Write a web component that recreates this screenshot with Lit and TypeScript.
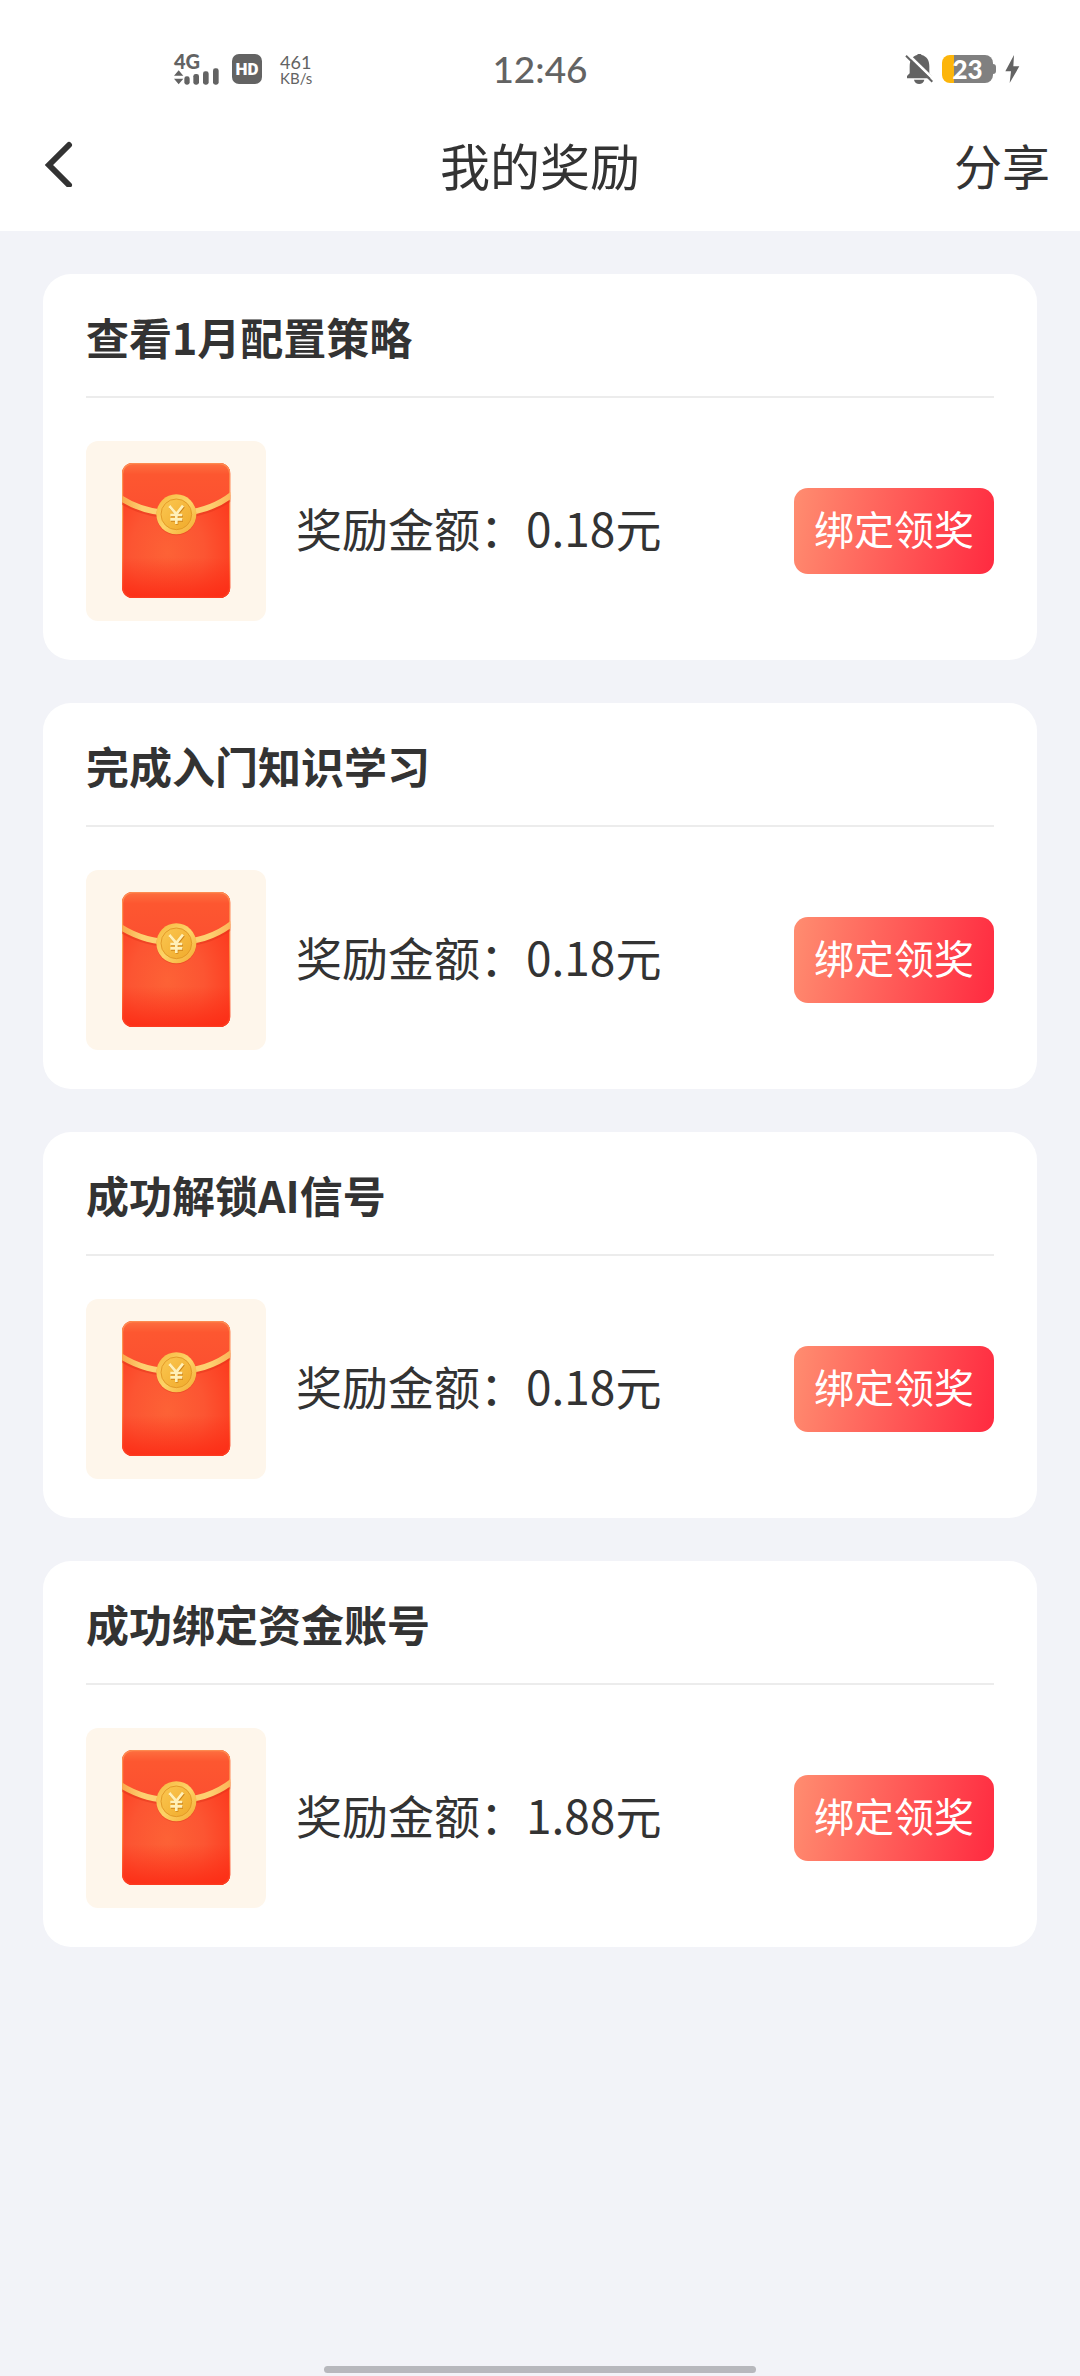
import { LitElement, html, css, svg } from "lit";
import { customElement, property } from "lit/decorators.js";

interface Reward {
  title: string;
  amount: string;
}

const REWARDS: Reward[] = [
  { title: "查看1月配置策略", amount: "0.18" },
  { title: "完成入门知识学习", amount: "0.18" },
  { title: "成功解锁AI信号", amount: "0.18" },
  { title: "成功绑定资金账号", amount: "1.88" },
];

@customElement("status-bar")
export class StatusBar extends LitElement {
  static styles = css`
    :host {
      display: grid;
      grid-template-columns: 1fr auto 1fr;
      align-items: center;
      height: 100px;
      padding: 38px 60px 0 174px;
      box-sizing: border-box;
      color: #636363;
      font-family: Lato, "Noto Sans", sans-serif;
    }
    .left,
    .right {
      display: flex;
      align-items: center;
    }
    .right {
      justify-content: flex-end;
      gap: 9px;
    }
    .signal {
      display: flex;
      flex-direction: column;
      width: 45px;
      margin-right: 13px;
    }
    .network {
      font: 900 20px/14px Lato, sans-serif;
    }
    .hd {
      width: 30px;
      height: 30px;
      margin-right: 18px;
      border-radius: 7px;
      background: #636363;
      color: #fff;
      font: 900 17px/30px Roboto, sans-serif;
      text-align: center;
    }
    .speed {
      display: flex;
      flex-direction: column;
      font-size: 15px;
      line-height: 15px;
    }
    .rate {
      font-size: 18px;
      line-height: 18px;
    }
    .clock {
      margin-right: 114px;
      font-size: 37px;
      line-height: 40px;
      font-weight: 500;
    }
    .battery {
      display: flex;
      align-items: center;
    }
    .cell {
      width: 51px;
      height: 28px;
      border-radius: 8px;
      background: linear-gradient(to right, #fcb50b 12px, #808080 12px);
      color: #fff;
      font: 900 26px/28px Lato, sans-serif;
      text-align: center;
    }
    .tip {
      width: 3px;
      height: 10px;
      border-radius: 0 3px 3px 0;
      background: #808080;
    }
    svg {
      display: block;
    }
  `;

  render() {
    return html`
      <div class="left">
        <div class="signal">
          <span class="network">4G</span>
          <svg width="45" height="17" viewBox="43 76 135 51" fill="#636363" aria-hidden="true">
            <path d="M43 99L57 83L71 99ZM43 108H71L57 125Z" />
            <rect x="74" y="101" width="16" height="25" rx="7" />
            <rect x="101" y="94" width="17" height="32" rx="7" />
            <rect x="130" y="86" width="17" height="40" rx="7" />
            <rect x="160" y="77" width="17" height="49" rx="7" />
          </svg>
        </div>
        <span class="hd">HD</span>
        <div class="speed"><span class="rate">461</span><span>KB/s</span></div>
      </div>
      <time class="clock">12:46</time>
      <div class="right">
        <svg width="28" height="30" viewBox="76 36 84 90" fill="#636363" aria-hidden="true">
          <path d="M82 109V102L90 94V73C90 52 100 42 112 39C114 34 124 34 126 39C141 43 149 54 149 73V94L156 102V109Z" />
          <path d="M103 113H134C132 130 105 130 103 113Z" />
          <path d="M84 36L164 114" stroke="#fff" stroke-width="8" />
          <path d="M79 41L158 119" stroke="#636363" stroke-width="6" />
        </svg>
        <div class="battery"><span class="cell">23</span><span class="tip"></span></div>
        <svg width="15" height="28" viewBox="376 42 45 84" fill="#636363" aria-hidden="true">
          <path d="M403 42L377 91H394L390 126L419 76H401Z" />
        </svg>
      </div>
    `;
  }
}

@customElement("reward-card")
export class RewardCard extends LitElement {
  @property() heading = "";
  @property() amount = "";

  static styles = css`
    :host {
      display: block;
      padding: 0 43px 39px;
      border-radius: 28px;
      background: #fff;
    }
    .title {
      margin: 0;
      padding: 32px 0 30px;
      border-bottom: 2px solid #ececec;
      font-size: 43px;
      line-height: 60px;
      font-weight: 700;
    }
    .row {
      display: flex;
      align-items: center;
      padding-top: 43px;
    }
    .thumb {
      flex: none;
      width: 180px;
      height: 180px;
      border-radius: 12px;
      background: #fef6eb;
    }
    .amount {
      flex: 1;
      margin: 0;
      padding: 0 0 8px 30px;
      font-size: 46px;
      line-height: 60px;
    }
    .claim {
      height: 86px;
      padding: 0 20px 6px;
      border: 0;
      border-radius: 14px;
      background: linear-gradient(100deg, #ff8d70, #ff2a40);
      color: #fff;
      font: inherit;
      font-size: 40px;
      line-height: 60px;
      white-space: nowrap;
    }
  `;

  private envelope() {
    return svg`
      <defs>
        <radialGradient id="body" cx="0.42" cy="0.66" r="0.68">
          <stop offset="0" stop-color="#fd6236" />
          <stop offset="0.5" stop-color="#fc5532" />
          <stop offset="1" stop-color="#fc3a1e" />
        </radialGradient>
        <linearGradient id="shade" x1="0" y1="0" x2="0" y2="1">
          <stop offset="0.7" stop-color="#fc2a14" stop-opacity="0" />
          <stop offset="1" stop-color="#fc2a14" stop-opacity="0.85" />
        </linearGradient>
        <linearGradient id="flap" x1="0" y1="0" x2="0" y2="1">
          <stop offset="0" stop-color="#fd7040" />
          <stop offset="0.22" stop-color="#fd5730" />
          <stop offset="1" stop-color="#fc4f30" />
        </linearGradient>
        <linearGradient id="edge" x1="0" y1="0" x2="0" y2="1">
          <stop offset="0" stop-color="#fd8a50" />
          <stop offset="0.4" stop-color="#fda052" />
          <stop offset="0.7" stop-color="#fd7a3a" />
          <stop offset="1" stop-color="#fc3a20" />
        </linearGradient>
        <linearGradient id="cord" x1="0" y1="0" x2="1" y2="0">
          <stop offset="0" stop-color="#f9a548" />
          <stop offset="0.2" stop-color="#fdd070" />
          <stop offset="0.8" stop-color="#fdd070" />
          <stop offset="1" stop-color="#fbb356" />
        </linearGradient>
        <linearGradient id="rim" x1="0" y1="0" x2="1" y2="1">
          <stop offset="0" stop-color="#f6b63c" />
          <stop offset="0.5" stop-color="#fdd468" />
          <stop offset="1" stop-color="#f3a92e" />
        </linearGradient>
        <linearGradient id="coin" x1="0" y1="0" x2="1" y2="1">
          <stop offset="0" stop-color="#fbc750" />
          <stop offset="1" stop-color="#f0aa2c" />
        </linearGradient>
        <clipPath id="shape"><rect x="156" y="128" width="325" height="405" rx="32" /></clipPath>
      </defs>
      <g clip-path="url(#shape)">
        <rect x="156" y="128" width="325" height="405" fill="url(#body)" />
        <rect x="156" y="128" width="325" height="405" fill="url(#shade)" />
        <path d="M156 128H481V225C390 302 247 302 156 232Z" fill="url(#flap)" />
        <rect x="157" y="129" width="323" height="403" rx="31" fill="none" stroke="url(#edge)" stroke-width="5" />
        <path d="M150 240C245 300 390 304 487 230" fill="none" stroke="#df3218" stroke-opacity="0.45" stroke-width="17" />
        <path d="M150 232C245 294 390 298 487 222" fill="none" stroke="url(#cord)" stroke-width="17" />
      </g>
      <circle cx="319" cy="285" r="60" fill="#d93c18" fill-opacity="0.4" />
      <circle cx="319" cy="282" r="60" fill="url(#rim)" />
      <circle cx="319" cy="282" r="46" fill="url(#coin)" stroke="#e39a28" stroke-width="3" />
      <g fill="none" stroke-linejoin="round">
        <path d="M300 260L321 284L341 259M321 284V313M303 287H339M303 300H339" stroke="#cf851a" stroke-width="8" />
        <path d="M298 257L319 281L339 256M319 281V311M301 284H337M301 297H337" stroke="#fff0b8" stroke-width="8" />
      </g>
    `;
  }

  render() {
    return html`
      <h2 class="title">${this.heading}</h2>
      <div class="row">
        <svg class="thumb" viewBox="48 62 540 540" aria-hidden="true">${this.envelope()}</svg>
        <p class="amount">奖励金额：${this.amount}元</p>
        <button class="claim" type="button">绑定领奖</button>
      </div>
    `;
  }
}

@customElement("app-root")
export class AppRoot extends LitElement {
  static styles = css`
    :host {
      display: flex;
      flex-direction: column;
      min-height: 100vh;
      box-sizing: border-box;
      background: #f2f3f8;
      color: #333;
      font-family: "Noto Sans CJK SC", sans-serif;
    }
    .top {
      background: #fff;
    }
    .nav {
      display: grid;
      grid-template-columns: 1fr auto 1fr;
      align-items: center;
      height: 131px;
      padding: 0 30px 4px;
      box-sizing: border-box;
    }
    .back {
      justify-self: start;
      padding: 0 14px;
      border: 0;
      background: none;
      color: inherit;
    }
    .back svg {
      display: block;
    }
    .heading {
      margin: 0;
      font-size: 50px;
      line-height: 72px;
      font-weight: 400;
    }
    .share {
      justify-self: end;
      padding: 0;
      border: 0;
      background: none;
      color: inherit;
      font: inherit;
      font-size: 48px;
      line-height: 72px;
    }
    .list {
      display: flex;
      flex-direction: column;
      gap: 43px;
      padding: 43px;
    }
    .home {
      width: 40%;
      height: 7px;
      margin: auto auto 3px;
      border-radius: 4px;
      background: #b7b8bd;
    }
  `;

  render() {
    return html`
      <header class="top">
        <status-bar></status-bar>
        <nav class="nav">
          <button class="back" type="button" aria-label="返回">
            <svg width="30" height="46" viewBox="0 0 30 46" fill="none" stroke="currentColor" stroke-width="6" stroke-linecap="round">
              <path d="M25 4L5 24L25 44" />
            </svg>
          </button>
          <h1 class="heading">我的奖励</h1>
          <button class="share" type="button">分享</button>
        </nav>
      </header>
      <main class="list">
        ${REWARDS.map(
          (r) => html`<reward-card .heading=${r.title} .amount=${r.amount}></reward-card>`
        )}
      </main>
      <div class="home"></div>
    `;
  }
}
